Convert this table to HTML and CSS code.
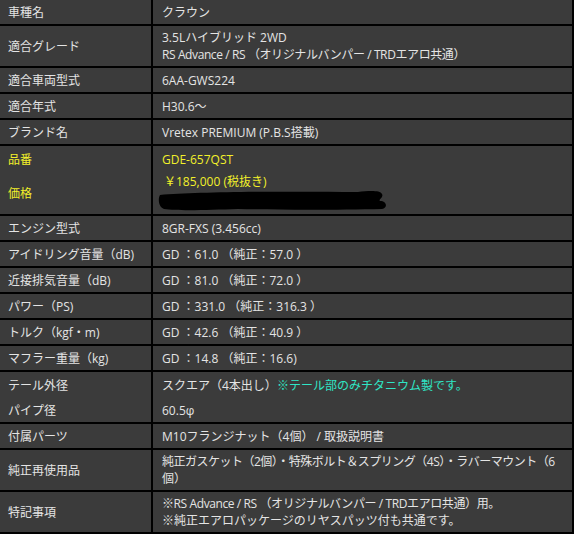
FILE: index.html
```html
<!DOCTYPE html>
<html lang="ja">
<head>
<meta charset="utf-8">
<title>スペック表</title>
<link rel="stylesheet" href="styles.css">
</head>
<body>
<div class="spec">
  <div class="row h26"><div class="k">車種名</div><div class="v"><div>クラウン</div></div></div>
  <div class="row h42"><div class="k">適合グレード</div><div class="v"><div>3.5Lハイブリッド 2WD<br><span class="tight">RS Advance / RS （オリジナルバンパー / TRDエアロ共通）</span></div></div></div>
  <div class="row h26"><div class="k">適合車両型式</div><div class="v"><div>6AA-GWS224</div></div></div>
  <div class="row h26"><div class="k">適合年式</div><div class="v"><div>H30.6～</div></div></div>
  <div class="row h26"><div class="k">ブランド名</div><div class="v"><div>Vretex PREMIUM (P.B.S搭載)</div></div></div>
  <div class="row h26 joined yellow"><div class="k">品番</div><div class="v"><div>GDE-657QST</div></div></div>
  <div class="row h44 yellow"><div class="k">価格</div><div class="v top"><div class="price">￥185,000 (税抜き)</div>
    <svg class="blot" width="232" height="22" viewBox="0 0 232 22"><path d="M2 5 C40 2 120 1 200 2 C210 1 222 0 224 4 C226 8 220 9 222 11 C229 11 230 18 224 19 C180 20 120 20 80 19 C50 20 20 21 6 19 C0 17 0 8 2 5 Z" fill="#000"/></svg></div></div>
  <div class="row h26"><div class="k">エンジン型式</div><div class="v"><div>8GR-FXS (3.456cc)</div></div></div>
  <div class="row h26"><div class="k">アイドリング音量（dB)</div><div class="v"><div>GD ：61.0 （純正：57.0 ）</div></div></div>
  <div class="row h26"><div class="k">近接排気音量（dB)</div><div class="v"><div>GD ：81.0 （純正：72.0 ）</div></div></div>
  <div class="row h26"><div class="k">パワー（PS)</div><div class="v"><div>GD ：331.0 （純正：316.3 ）</div></div></div>
  <div class="row h26"><div class="k">トルク（kgf・m)</div><div class="v"><div>GD ：42.6 （純正：40.9 ）</div></div></div>
  <div class="row h26"><div class="k">マフラー重量（kg)</div><div class="v"><div>GD ：14.8 （純正：16.6)</div></div></div>
  <div class="row h26 joined"><div class="k">テール外径</div><div class="v"><div>スクエア（4本出し）<span class="cyan">※テール部のみチタニウム製です。</span></div></div></div>
  <div class="row h26"><div class="k">パイプ径</div><div class="v"><div>60.5φ</div></div></div>
  <div class="row h26"><div class="k">付属パーツ</div><div class="v"><div>M10フランジナット（4個） / 取扱説明書</div></div></div>
  <div class="row h42"><div class="k">純正再使用品</div><div class="v"><div><span class="tighter">純正ガスケット（2個）・特殊ボルト＆スプリング（4S）・ラバーマウント（6</span><br>個）</div></div></div>
  <div class="row h42"><div class="k">特記事項</div><div class="v"><div><span class="tight">※RS Advance / RS （オリジナルバンパー / TRDエアロ共通）用。</span><br>※純正エアロパッケージのリヤスパッツ付も共通です。</div></div></div>
</div>
</body>
</html>
```

FILE: styles.css
```css
html, body {
  margin: 0;
  padding: 0;
  background: #3b3b3b;
}
.spec {
  width: 572px;
  border-right: 2px solid #000;
  font-family: "Open Sans", "Noto Sans CJK JP", sans-serif;
  font-size: 12px;
  line-height: 17px;
  color: #e4e4e4;
  background: #3b3b3b;
}
.row {
  display: grid;
  grid-template-columns: 153px 1fr;
  border-bottom: 2px solid #000;
  box-sizing: border-box;
}
.row.joined {
  border-bottom: none;
}
.h26 { height: 26px; }
.h42 { height: 42px; }
.h44 { height: 44px; }
.k {
  border-right: 2px solid #000;
  padding-left: 8px;
  display: flex;
  align-items: center;
}
.v {
  padding-left: 9px;
  padding-right: 4px;
  display: flex;
  align-items: center;
  white-space: nowrap;
}
.v.top {
  flex-direction: column;
  justify-content: flex-start;
  align-items: flex-start;
  padding-top: 1px;
}
.tight { letter-spacing: -0.4px; }
.tighter { letter-spacing: -0.5px; }
.yellow { color: #f2f02a; }
.price { padding-left: 2px; }
.blot { display: block; margin-left: -4px; margin-top: 0; }
.cyan { color: #2fe6c6; }
```
